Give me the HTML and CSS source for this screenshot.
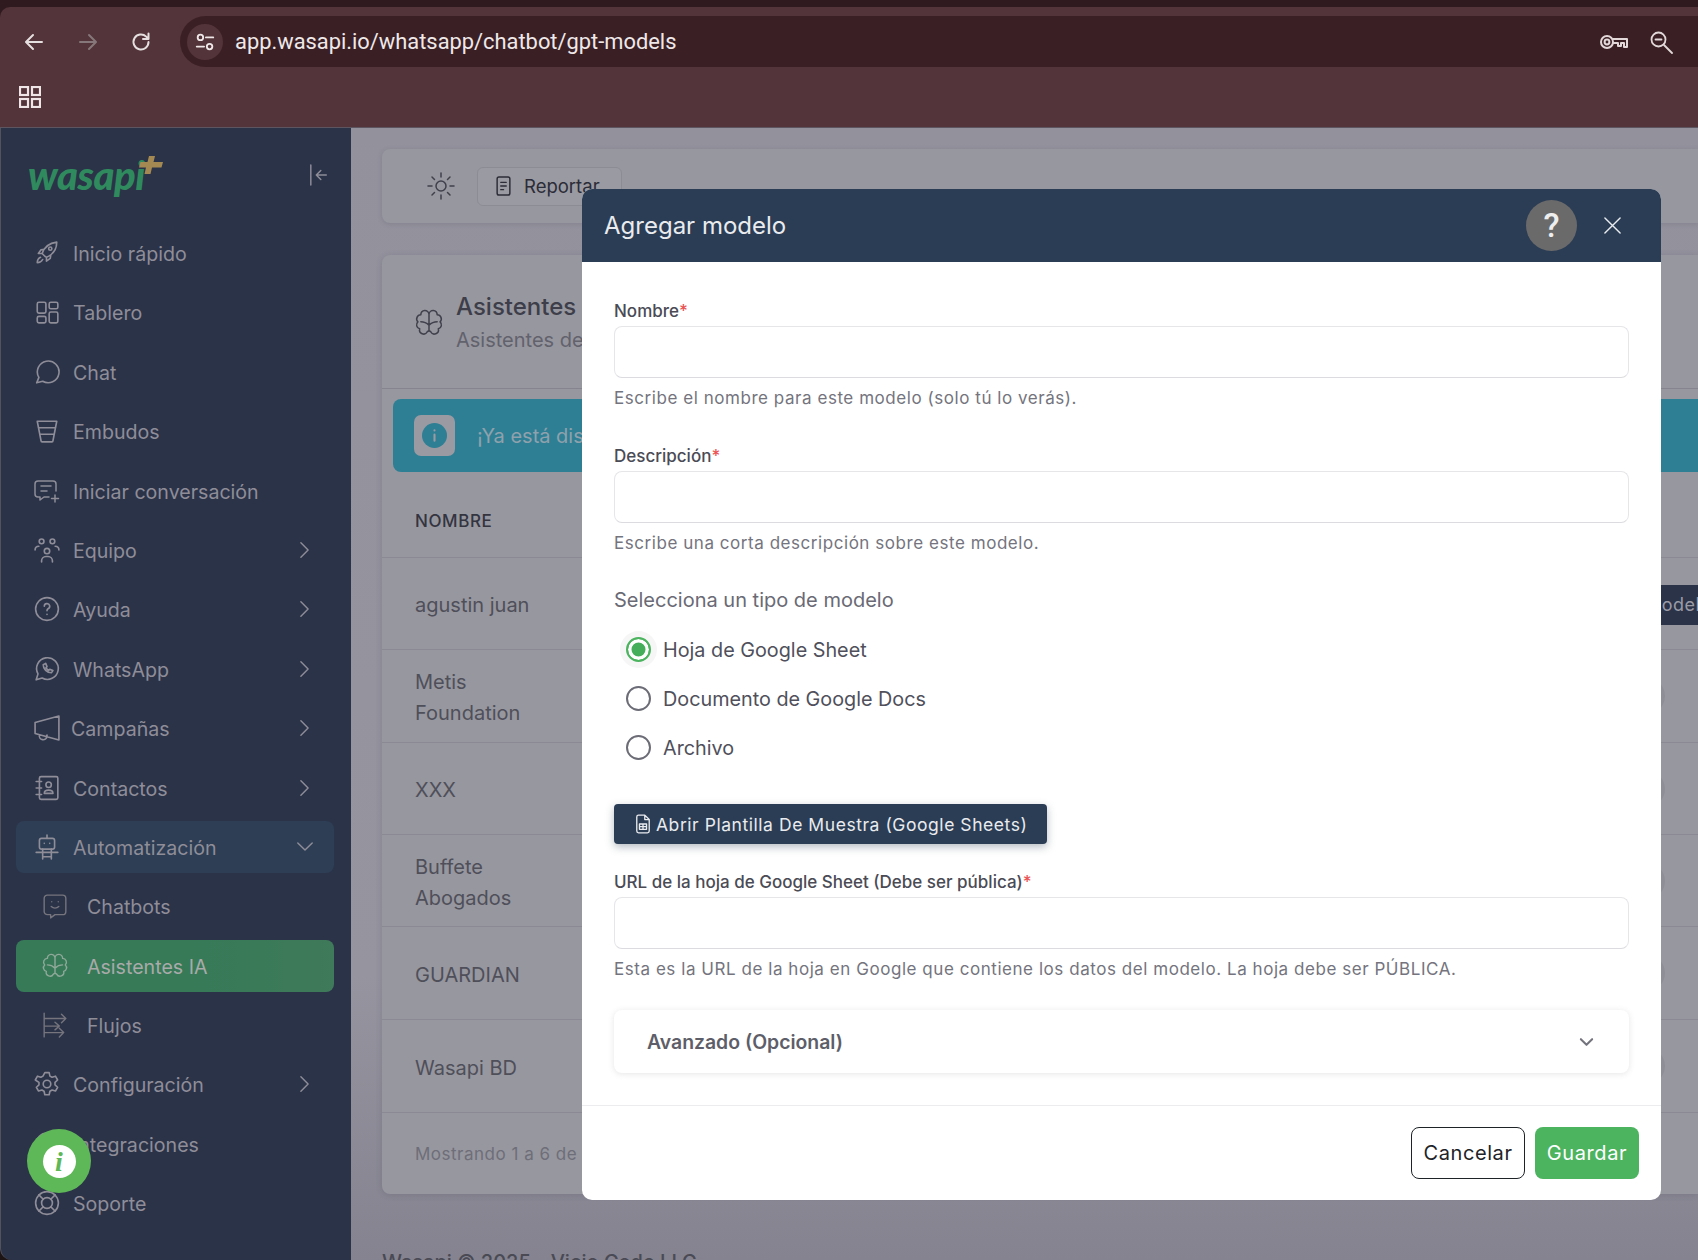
FILE: index.html
```html
<!DOCTYPE html>
<html lang="es">
<head>
<meta charset="utf-8">
<title>Wasapi</title>
<link rel="stylesheet" href="styles.css">
</head>
<body>
<div class="window">
  <header class="chrome">
    <div class="chrome-body">
      <div class="toolbar">
        <div class="navs">
          <svg class="nav-ic" viewBox="0 0 24 24"><path d="M20 12H5M11 5l-7 7 7 7"/></svg>
          <svg class="nav-ic dim" viewBox="0 0 24 24"><path d="M4 12h15M13 5l7 7-7 7"/></svg>
          <svg class="nav-ic" viewBox="0 0 24 24"><path d="M19.500 12a7.500 7.500 0 1 1-2.300-5.400L19.500 9M19.500 3.500V9H14"/></svg>
        </div>
        <div class="omnibox">
          <span class="tune"><svg viewBox="0 0 24 24"><circle cx="7" cy="7" r="3"/><path d="M13 7h8M3 17h8"/><circle cx="17" cy="17" r="3"/></svg></span>
          <span class="url">app.wasapi.io/whatsapp/chatbot/gpt-models</span>
          <span class="omni-right">
            <svg class="omni-ic wide" viewBox="0 0 30 20"><circle cx="8" cy="10" r="6"/><circle cx="8" cy="10" r="2.400"/><path d="M14 7h14v8h-3v-4h-3v3h-3V11h-5"/></svg>
            <svg class="omni-ic" viewBox="0 0 24 24"><circle cx="9.500" cy="9.500" r="7"/><path d="M6.500 9.500h6M15 15l8 8"/></svg>
          </span>
        </div>
      </div>
      <div class="bookmarks">
        <svg class="apps" viewBox="0 0 22 22"><rect x="1" y="1" width="8" height="8"/><rect x="13" y="1" width="8" height="8"/><rect x="1" y="13" width="8" height="8"/><rect x="13" y="13" width="8" height="8"/></svg>
      </div>
    </div>
  </header>

  <div class="app">
    <aside class="sidebar">
      <div class="brand">
        <div class="logo"><span class="logo-word">wasapi</span><svg class="logo-plus" viewBox="0 0 24 18"><path d="M10 0h6l-1.500 6H24l-1.500 5.500H13L11.500 18h-6L7 11.500H0L1.500 6H8.500z"/></svg></div>
        <svg class="collapse" viewBox="0 0 22 24"><path d="M2 1v22M19 12H8M13 7l-5 5 5 5"/></svg>
      </div>
      <nav class="menu">
        <a class="item"><svg class="ic" viewBox="0 0 24 24"><path d="M10 15l-2.500-2.500C9 8 13 3 21 2c0 8-5 12-9.500 14zM7.500 12.500H4l2.500-3.500 3-.5M11.500 16v3.500L15 17l.5-3M6 16c-2 1-3 3-3 5 2 0 4-1 5-3"/><circle cx="15" cy="8" r="1.500"/></svg><span>Inicio rápido</span></a>
        <a class="item"><svg class="ic" viewBox="0 0 24 24"><rect x="3" y="3" width="8" height="10" rx="1.500"/><rect x="14" y="3" width="8" height="6" rx="1.500"/><rect x="3" y="16" width="8" height="6" rx="1.500"/><rect x="14" y="12" width="8" height="10" rx="1.500"/></svg><span>Tablero</span></a>
        <a class="item"><svg class="ic" viewBox="0 0 24 24"><path d="M2.500 22l2-5A10 10 0 1 1 8 20.500z"/></svg><span>Chat</span></a>
        <a class="item"><svg class="ic" viewBox="0 0 24 24"><path d="M3 3h18l-3.500 18a1 1 0 0 1-1 1h-9a1 1 0 0 1-1-1zM4 9h16M5.500 15h13"/></svg><span>Embudos</span></a>
        <a class="item"><svg class="ic" viewBox="0 0 26 24"><path d="M15 18h-5l-4 3v-3H4a3 3 0 0 1-3-3V5a3 3 0 0 1 3-3h15a3 3 0 0 1 3 3v7M7 7h10M7 12h6M21 16v7M17.500 19.500h7"/></svg><span>Iniciar conversación</span></a>
        <a class="item"><svg class="ic" viewBox="0 0 24 24"><circle cx="7" cy="4" r="2.200"/><circle cx="17" cy="4" r="2.200"/><circle cx="12" cy="13" r="2.500"/><path d="M1 12c0-2 1.500-3.500 3.500-3.500M23 12c0-2-1.500-3.500-3.500-3.500M7 23v-1a4 4 0 0 1 4-4h2a4 4 0 0 1 4 4v1"/></svg><span>Equipo</span><svg class="chev" viewBox="0 0 12 20"><path d="M2 2l8 8-8 8"/></svg></a>
        <a class="item"><svg class="ic" viewBox="0 0 24 24"><circle cx="12" cy="12" r="10.500"/><path d="M9.500 9.500a2.500 2.500 0 1 1 3.500 2.300c-.7.400-1 .800-1 1.700M12 17v.1"/></svg><span>Ayuda</span><svg class="chev" viewBox="0 0 12 20"><path d="M2 2l8 8-8 8"/></svg></a>
        <a class="item"><svg class="ic" viewBox="0 0 24 24"><path d="M2 22l1.700-5.500A10 10 0 1 1 7.500 20.300z"/><path d="M8.500 8c0 4 3.500 7.500 7.500 7.500l1.500-2-3-1.200-1 1c-1-.5-2-1.500-2.500-2.500l1-1-1.200-3z"/></svg><span>WhatsApp</span><svg class="chev" viewBox="0 0 12 20"><path d="M2 2l8 8-8 8"/></svg></a>
        <a class="item camp"><svg class="ic" viewBox="0 0 24 24"><path d="M1 7l22-6v22L1 17zM1 7v10M5 18.500a3.500 3.500 0 0 0 7 1.500v-1.500"/></svg><span>Campañas</span><svg class="chev" viewBox="0 0 12 20"><path d="M2 2l8 8-8 8"/></svg></a>
        <a class="item"><svg class="ic" viewBox="0 0 24 24"><rect x="5" y="1.500" width="17" height="21" rx="1.500"/><circle cx="13.500" cy="9" r="2.500"/><path d="M9.500 17c0-2 1.500-3 4-3s4 1 4 3zM2 6h5M2 12h5M2 18h5"/></svg><span>Contactos</span><svg class="chev" viewBox="0 0 12 20"><path d="M2 2l8 8-8 8"/></svg></a>
        <a class="item open"><svg class="ic" viewBox="0 0 24 24"><rect x="5" y="4" width="14" height="10" rx="2"/><path d="M12 4V1M9.500 8.500v.1M14.500 8.500v.1M2 17h20M8 14v9M16 14v9M8 21h8"/></svg><span>Automatización</span><svg class="chev" viewBox="0 0 20 12"><path d="M2 2l8 8 8-8"/></svg></a>
        <a class="item sub"><svg class="ic" viewBox="0 0 24 24"><path d="M12 20l-4 3v-3H5a3 3 0 0 1-3-3V5a3 3 0 0 1 3-3h14a3 3 0 0 1 3 3v12a3 3 0 0 1-3 3zM9 8v.1M15 8v.1M8.500 12.500c2 1.700 5 1.700 7 0"/></svg><span>Chatbots</span></a>
        <a class="item sub active"><svg class="ic" viewBox="0 0 24 24"><path d="M12 4.500a3.500 3.500 0 0 0-7 .5 3.500 3.500 0 0 0-2.500 6 3.500 3.500 0 0 0 1.500 6 3.500 3.500 0 0 0 6.500 2.500l1.500-1 1.500 1a3.500 3.500 0 0 0 6.500-2.500 3.500 3.500 0 0 0 1.500-6 3.500 3.500 0 0 0-2.500-6 3.500 3.500 0 0 0-7-.5zM12 4.500v14M5 11c2.500 0 5 1 7 3 2-2 4.500-3 7-3"/></svg><span>Asistentes IA</span></a>
        <a class="item sub"><svg class="ic" viewBox="0 0 24 24"><path d="M2 1v22M2 6h20M18 2l4 4-4 4M2 13h14M12 9.500l4 3.500-4 3.500M2 19h18M16 15l4 4-4 4"/></svg><span>Flujos</span></a>
        <a class="item"><svg class="ic" viewBox="0 0 24 24"><path d="M10 1.500h4l.7 3.200 2 1.100 3.100-1 2 3.500-2.400 2.200v2.300l2.400 2.200-2 3.500-3.100-1-2 1.200-.7 3.200h-4l-.7-3.200-2-1.200-3.100 1-2-3.500 2.400-2.200v-2.300L1.200 8.300l2-3.500 3.100 1 2-1.100z"/><circle cx="12" cy="12" r="3.500"/></svg><span>Configuración</span><svg class="chev" viewBox="0 0 12 20"><path d="M2 2l8 8-8 8"/></svg></a>
        <a class="item"><svg class="ic" viewBox="0 0 24 24"><circle cx="12" cy="12" r="10"/></svg><span>Integraciones</span></a>
        <a class="item"><svg class="ic" viewBox="0 0 24 24"><circle cx="12" cy="12" r="10.500"/><circle cx="12" cy="12" r="5"/><path d="M4.500 4.500L8.500 8.500M19.500 4.500L15.500 8.500M4.500 19.500L8.500 15.500M19.500 19.500L15.500 15.500"/></svg><span>Soporte</span></a>
      </nav>
    </aside>

    <main class="main">
      <div class="topcard">
        <svg class="sun" viewBox="0 0 28 28"><circle cx="14" cy="14" r="5"/><path d="M14 1v4M14 23v4M1 14h4M23 14h4M5 5l2.500 2.500M20.500 20.500L23 23M5 23l2.500-2.500M20.500 7.500L23 5"/></svg>
        <button class="report"><svg viewBox="0 0 18 22"><rect x="2" y="1" width="14" height="20" rx="2"/><path d="M6 7h6M6 11h6M6 15h3"/></svg>Reportar</button>
      </div>
      <section class="card">
        <div class="card-head">
          <svg class="brain" viewBox="0 0 24 24"><path d="M12 4.500a3.500 3.500 0 0 0-7 .5 3.500 3.500 0 0 0-2.500 6 3.500 3.500 0 0 0 1.500 6 3.500 3.500 0 0 0 6.500 2.500l1.500-1 1.500 1a3.500 3.500 0 0 0 6.500-2.500 3.500 3.500 0 0 0 1.500-6 3.500 3.500 0 0 0-2.500-6 3.500 3.500 0 0 0-7-.5zM12 4.500v14M5 11c2.500 0 5 1 7 3 2-2 4.500-3 7-3"/></svg>
          <div><h1>Asistentes IA</h1><p>Asistentes de inteligencia artificial</p></div>
        </div>
        <div class="alert"><span class="alert-ic"><svg viewBox="0 0 24 24"><circle cx="12" cy="12" r="12"/><path d="M12 7v.1M12 11v6"/></svg></span><span>¡Ya está disponible!</span></div>
        <div class="thead">NOMBRE</div>
        <div class="row"><span>agustin juan</span><b class="model">Modelos</b></div>
        <div class="row tall act"><span>Metis<br>Foundation</span></div>
        <div class="row act"><span>XXX</span></div>
        <div class="row act"><span>Buffete<br>Abogados</span></div>
        <div class="row tall act"><span>GUARDIAN</span></div>
        <div class="row tall act"><span>Wasapi BD</span></div>
        <div class="tfoot">Mostrando 1 a 6 de 6</div>
      </section>
      <footer class="foot">Wasapi © 2025 - Vicio Code LLC</footer>
    </main>
  </div>

  <button class="fab"><span>i</span></button>

  <div class="modal">
    <div class="modal-head">
      <h2>Agregar modelo</h2>
      <span class="help">?</span>
      <svg class="close" viewBox="0 0 20 20"><path d="M2 2l16 16M18 2L2 18"/></svg>
    </div>
    <div class="modal-body">
      <label class="label">Nombre<em>*</em></label>
      <div class="input"></div>
      <p class="hint">Escribe el nombre para este modelo (solo tú lo verás).</p>
      <label class="label second">Descripción<em>*</em></label>
      <div class="input"></div>
      <p class="hint">Escribe una corta descripción sobre este modelo.</p>
      <p class="group">Selecciona un tipo de modelo</p>
      <div class="radios">
        <div class="radio checked"><i></i>Hoja de Google Sheet</div>
        <div class="radio"><i></i>Documento de Google Docs</div>
        <div class="radio"><i></i>Archivo</div>
      </div>
      <button class="template"><svg viewBox="0 0 18 22"><path d="M2 3a2 2 0 0 1 2-2h7l5 5v13a2 2 0 0 1-2 2H4a2 2 0 0 1-2-2zM11 1v5h5M5 11h8v6H5zM5 14h8M9 11v6"/></svg>Abrir Plantilla De Muestra (Google Sheets)</button>
      <label class="label url-label">URL de la hoja de Google Sheet (Debe ser pública)<em>*</em></label>
      <div class="input"></div>
      <p class="hint">Esta es la URL de la hoja en Google que contiene los datos del modelo. La hoja debe ser PÚBLICA.</p>
      <div class="accordion"><span>Avanzado (Opcional)</span><svg viewBox="0 0 16 10"><path d="M2 2l6 6 6-6"/></svg></div>
    </div>
    <div class="modal-foot">
      <button class="btn cancel">Cancelar</button>
      <button class="btn save">Guardar</button>
    </div>
  </div>
</div>
</body>
</html>
```

FILE: styles.css
```css
* { box-sizing: border-box; }
html, body { margin: 0; height: 100%; overflow: hidden; background: #1d1416; }
body { font-family: "Inter", "Liberation Sans", sans-serif; }
svg { fill: none; stroke: currentColor; stroke-linecap: round; stroke-linejoin: round; display: block; flex: none; }
p, h1, h2 { margin: 0; font-weight: 400; }
button { font-family: inherit; }

.window { position: relative; width: 1698px; height: 1260px; overflow: hidden; display: flex; flex-direction: column; }

.chrome { height: 128px; flex: none; background: #2f1a20; padding-top: 7px; }
.chrome-body { height: 121px; background: #52343a; border-radius: 10px 0 0 0; border-bottom: 1px solid #5d5560; padding-top: 9px; }
.toolbar { display: flex; align-items: center; height: 51px; }
.navs { display: flex; width: 180px; padding-left: 22px; gap: 29.500px; color: #e6dfe0; }
.nav-ic { width: 24px; height: 24px; stroke-width: 2; }
.nav-ic.dim { color: #86777a; }
.omnibox { flex: 1; height: 51px; background: #3a1f24; border-radius: 26px 0 0 26px; display: flex; align-items: center; padding-left: 7px; }
.tune { width: 36px; height: 36px; border-radius: 50%; background: #52343a; display: flex; align-items: center; justify-content: center; color: #efe7e8; }
.tune svg { width: 22px; height: 22px; stroke-width: 2; }
.url { margin-left: 12px; color: #efe8e9; font: 21.860px/1 "Roboto", sans-serif; }
.omni-right { margin-left: auto; display: flex; align-items: center; gap: 20px; padding-right: 25px; color: #e2d8d9; }
.omni-ic { width: 24px; height: 24px; stroke-width: 1.800; }
.omni-ic.wide { width: 30px; height: 20px; stroke-width: 2; }
.bookmarks { height: 60px; display: flex; align-items: center; padding-left: 19px; color: #eee5e6; }
.apps { width: 22px; height: 22px; stroke-width: 2.200; stroke-linejoin: miter; }

.app { flex: 1; min-height: 0; display: flex; }

.sidebar { width: 351px; flex: none; background: #2b3349; color: #8f8d98; border-left: 1px solid #55525c; border-bottom-left-radius: 12px; }
.brand { height: 99px; display: flex; align-items: center; padding: 0 22px 5px 27px; justify-content: space-between; }
.logo { position: relative; display: flex; }
.logo-word { color: #2f8a5d; font: italic 900 40px/1 "Lato", sans-serif; letter-spacing: -.4px; }
.logo-plus { position: absolute; right: -18px; top: 1px; width: 24px; height: 18px; fill: #a48a52; stroke: none; }
.collapse { width: 20px; height: 22px; stroke-width: 1.600; color: #8f8d98; }
.menu { display: flex; flex-direction: column; gap: 7.400px; padding: 0 17px 0 15px; }
.item { height: 52px; display: flex; align-items: center; padding: 2px 24px 0 18px; border-radius: 8px; font-size: 19.600px; flex: none; }
.ic { width: 26px; height: 26px; stroke-width: 1.500; margin: -2px 13px 0 0; }
.camp span { margin-left: -2px; }
.chev { width: 11px; height: 18px; margin: -2px 0 0 auto; stroke-width: 1.600; }
.open .chev { width: 18px; height: 11px; margin-right: -4px; }
.open { background: #2d3e55; }
.sub { padding-left: 26px; }
.sub .ic { margin-right: 19px; color: #76747c; stroke-width: 1.300; }
.active { background: linear-gradient(90deg, #367a58 55%, #3f7a5a 100%); color: #a9aaa9; }
.sub.active .ic { color: #8fa898; }

.main { flex: 1; min-width: 0; background: linear-gradient(180deg, #92919c 0%, #95949f 75%, #84838f 100%); padding: 21px 0 0 31px; }
.topcard { height: 74px; background: #97979f; border-radius: 8px 0 0 8px; display: flex; align-items: center; padding-left: 45px; gap: 22px; color: #3f404b; box-shadow: 0 1px 5px rgba(60,60,75,.18); }
.sun { width: 28px; height: 28px; stroke-width: 1.500; }
.report { height: 39px; width: 145px; display: flex; align-items: center; gap: 12px; padding: 0 0 0 17px; background: #9a9aa2; border: 1px solid #8c8c95; border-radius: 6px; color: #2b2c37; font-size: 18.500px; }
.report svg { width: 17px; height: 20px; stroke-width: 1.600; }

.card { margin-top: 32px; background: #97979f; border-radius: 8px 0 0 8px; height: 939px; box-shadow: 0 1px 6px rgba(60,60,75,.2); }
.card-head { height: 134px; display: flex; align-items: center; padding: 3px 0 0 33px; gap: 13px; border-bottom: 1px solid #86858f; }
.brain { width: 28px; height: 30px; stroke-width: 1.300; color: #3f404b; }
.card-head h1 { font-size: 24px; font-weight: 500; color: #3d3e49; line-height: 34px; }
.card-head p { font-size: 20px; color: #62626d; line-height: 33px; white-space: nowrap; }
.alert { margin: 10px 0 0 11px; height: 73px; background: #2e7f94; border-radius: 8px 0 0 8px; display: flex; align-items: center; padding-left: 21px; gap: 22px; color: #8fa1ac; font-size: 20px; }
.alert-ic { width: 41px; height: 41px; border-radius: 7px; background: #9a9aa2; display: flex; align-items: center; justify-content: center; }
.alert-ic svg { width: 25px; height: 25px; fill: #2e7f94; stroke: #9a9aa2; stroke-width: 2; }
.alert-ic circle { stroke: none; }
.thead { height: 86px; display: flex; align-items: center; padding: 12px 0 0 33px; font-size: 17px; font-weight: 500; letter-spacing: .6px; color: #33343f; border-bottom: 1px solid #8a8994; }
.row { height: 92px; display: flex; align-items: center; padding: 4px 0 0 33px; font-size: 20px; line-height: 31px; color: #4f4f5a; border-bottom: 1px solid #8a8994; position: relative; }
.row.tall { height: 93px; }
.act::after { content: ""; position: absolute; left: 1247px; top: 28px; width: 36px; height: 36px; border-radius: 50%; background: #8e8e96; }
.model { position: absolute; left: 1252px; top: 27px; height: 40px; width: 100px; background: #2b3349; border-radius: 6px; color: #9a9aa5; font-weight: 400; font-size: 18px; letter-spacing: .5px; line-height: 40px; padding-left: 11px; white-space: nowrap; overflow: hidden; }
.tfoot { padding: 31px 0 0 33px; font-size: 17px; color: #6e6e79; letter-spacing: .5px; }
.foot { margin-top: 56px; font-size: 20px; line-height: 24px; color: #4a4a55; font-weight: 500; }

.fab { position: absolute; left: 27px; top: 1129px; width: 64px; height: 64px; border: 0; border-radius: 50%; background: #5fb857; display: flex; align-items: center; justify-content: center; padding: 0; }
.fab span { width: 33px; height: 33px; border-radius: 50%; background: #fff; color: #5fb857; font: italic 700 28px/33px "Liberation Serif", serif; text-align: center; }

.modal { position: absolute; left: 582px; top: 189px; width: 1079px; height: 1011px; background: #fff; border-radius: 10px; display: flex; flex-direction: column; overflow: hidden; }
.modal-head { height: 73px; flex: none; background: #2b3d54; display: flex; align-items: center; padding: 0 39px 0 22px; }
.modal-head h2 { font-size: 24px; color: #e9ebef; flex: 1; }
.help { width: 51px; height: 51px; border-radius: 50%; background: #6b6a6b; color: #eee; text-align: center; font: 500 33px/51px "Roboto", sans-serif; margin-right: 26px; }
.close { width: 19px; height: 19px; color: #e9ebef; stroke-width: 1.500; }

.modal-body { flex: 1; padding: 37px 32px 0; }
.label { display: block; font-size: 17px; line-height: 24px; font-weight: 500; color: #4a4b55; }
.label em { color: #ea5455; font-style: normal; }
.input { height: 52px; margin-top: 3px; border: 1px solid #e6e6e9; border-bottom-color: #dcdce0; border-radius: 8px; }
.hint { margin-top: 9px; font-size: 17px; line-height: 22px; letter-spacing: .55px; color: #74747e; }
.second { margin-top: 35px; }
.group { margin-top: 32px; font-size: 20px; line-height: 28px; color: #6a6a75; }
.radios { margin-top: 11px; padding-left: 12px; display: flex; flex-direction: column; }
.radio { height: 49px; display: flex; align-items: center; gap: 12px; font-size: 19.800px; color: #4f505b; }
.radio i { width: 25px; height: 25px; border: 2.500px solid #6c6c77; border-radius: 50%; flex: none; }
.radio.checked i { border-color: #4cb35f; background: #45ae5a; box-shadow: inset 0 0 0 3.500px #fff, 0 0 0 6px #f6f6f7; }
.template { margin-top: 32px; height: 40px; width: 433px; background: #2b3d54; border: 0; border-radius: 4px; color: #e9ebef; font-size: 17.500px; letter-spacing: .55px; display: flex; align-items: center; padding: 0 0 0 21px; gap: 5px; box-shadow: 0 3px 8px rgba(43,61,84,.35); }
.template svg { width: 16px; height: 20px; stroke-width: 1.500; }
.url-label { margin-top: 26px; }
.accordion { margin-top: 30px; height: 63px; border-radius: 8px; box-shadow: 0 1px 6px rgba(70,70,85,.14); display: flex; align-items: center; padding: 0 35px 0 33px; justify-content: space-between; font-size: 19.400px; font-weight: 600; color: #5e5e69; }
.accordion svg { width: 15px; height: 10px; stroke-width: 2.200; color: #74747e; }

.modal-foot { height: 95px; flex: none; border-top: 1px solid #ececee; display: flex; justify-content: flex-end; align-items: flex-start; padding: 21px 22px 0 0; gap: 10px; }
.btn { height: 52px; border-radius: 8px; font-size: 20px; letter-spacing: .6px; padding: 0; }
.cancel { width: 114px; background: #fff; border: 1px solid #1d2327; color: #1d2327; }
.save { width: 104px; background: #4cb35f; border: 0; color: #fff; }
```
